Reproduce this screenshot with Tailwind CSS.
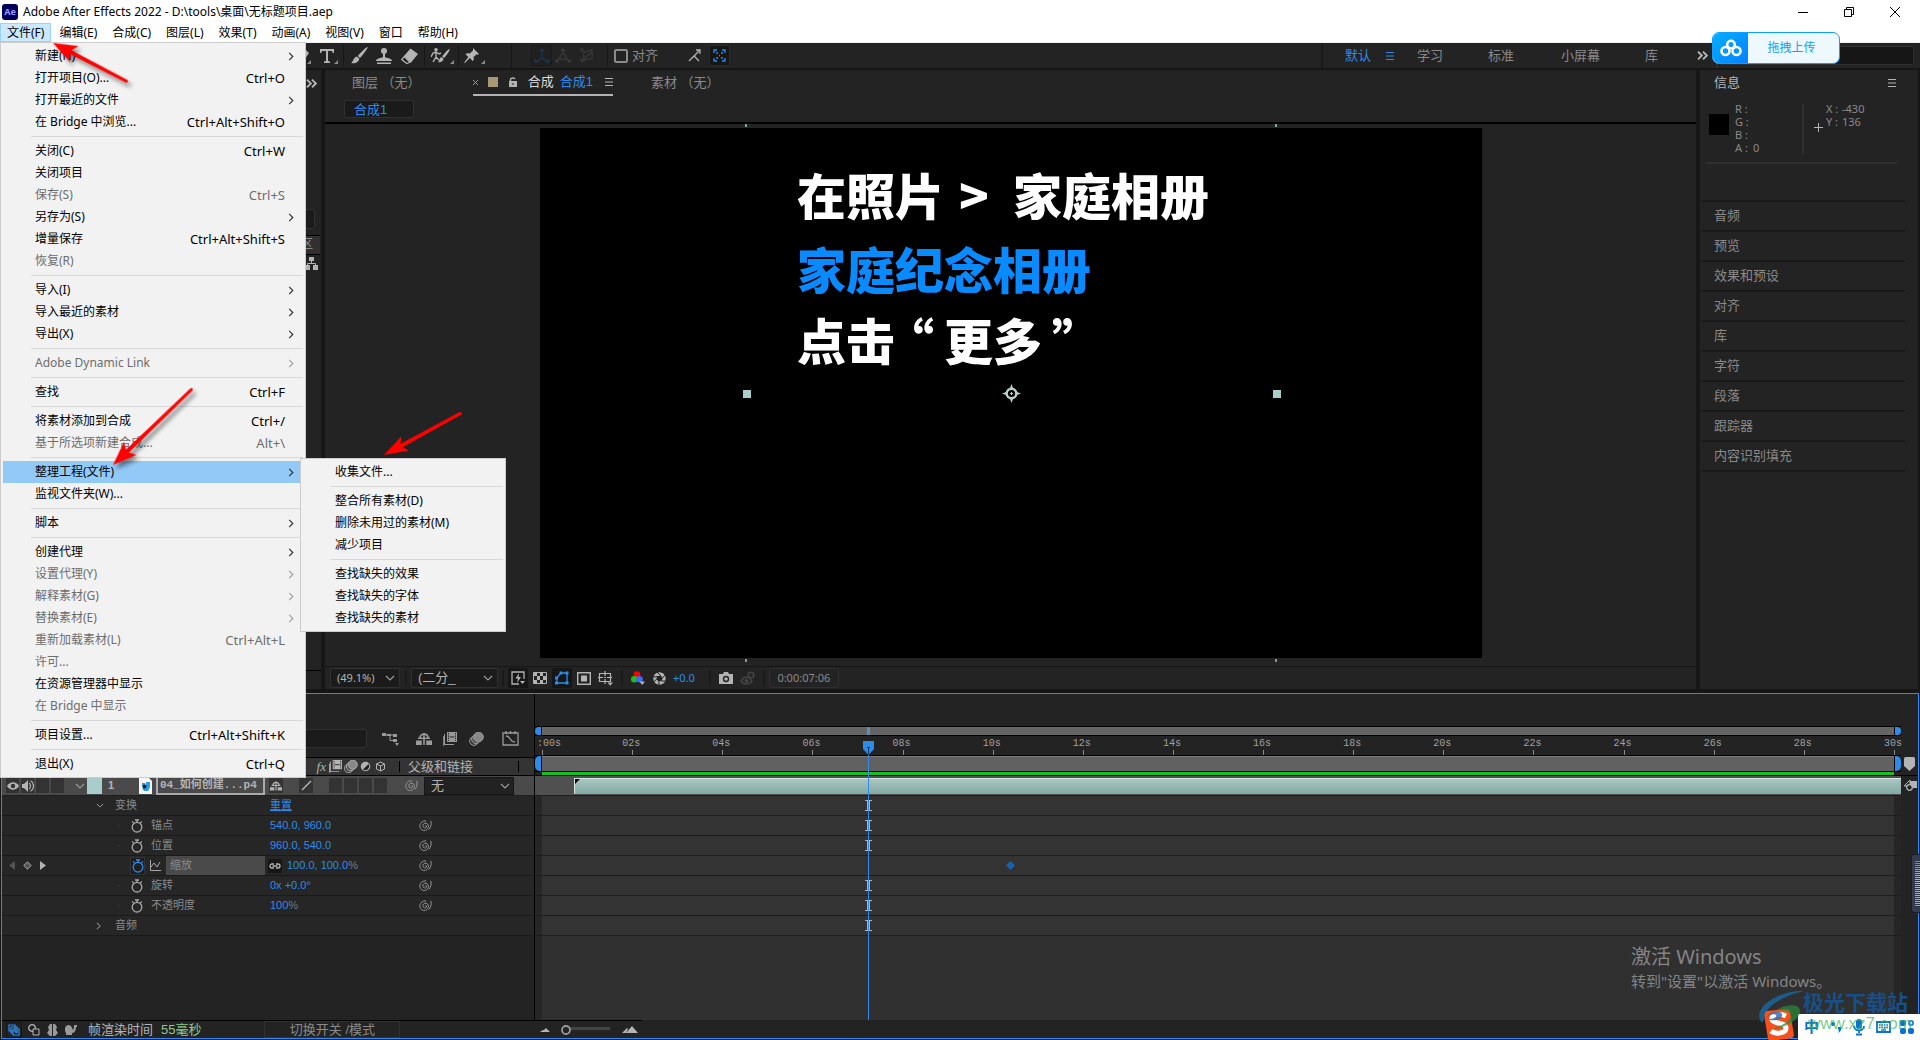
<!DOCTYPE html>
<html lang="zh-CN">
<head>
<meta charset="utf-8">
<title>Adobe After Effects 2022</title>
<script src="https://cdn.jsdelivr.net/npm/@tailwindcss/browser@4"></script>
</head>
<body class="relative flex min-h-screen flex-col overflow-x-hidden bg-[#161616] font-['Liberation_Sans','Noto_Sans_CJK_SC',sans-serif] text-[13px] text-[#8a8a8a]">

<svg class="hidden">
  <symbol id="tri" viewBox="0 0 4 4"><path d="M4 0V4H0z" fill="#8a8a8a"/></symbol>
  <symbol id="down" viewBox="0 0 10 6"><path d="M1 1l4 4 4-4" fill="none" stroke="#9a9a9a" stroke-width="1.2"/></symbol>
  <symbol id="right" viewBox="0 0 6 10"><path d="M1 1l4 4-4 4" fill="none" stroke="currentColor" stroke-width="1.3"/></symbol>
  <symbol id="more" viewBox="0 0 11 9"><path d="M1 .7l3.8 3.8L1 8.300M6 .7l3.800 3.800L6 8.300" fill="none" stroke="#b4b4b4" stroke-width="1.900"/></symbol>
  <symbol id="burger" viewBox="0 0 8 8"><path d="M0 .5h8M0 4h8M0 7.500h8" stroke="currentColor"/></symbol>
  <symbol id="watch" viewBox="0 0 12 14"><circle cx="6" cy="8.200" r="4.800" fill="none" stroke="currentColor" stroke-width="1.300"/><path d="M4 1h4M6 1v2.500M1.200 2.500l1.300 1.300M10.800 2.500L9.500 3.800" stroke="currentColor" stroke-width="1.300"/></symbol>
  <symbol id="spiral" viewBox="0 0 13 12"><path d="M6 6.200c.3-1 1.800-.7 1.600.6-.3 1.600-3.300 1.700-3.700-.5C3.600 4 5.300 2.800 7 3.200c2 .5 2.900 2.500 2.200 4.500C8.300 10.400 5 11.300 2.800 9.800.3 8 .3 4.600 2.200 2.600 3.500 1.100 5.500.7 7.200 1M11.800.8c.6 3 .4 6-1.800 8.500" fill="none" stroke="#979797" stroke-width="1"/></symbol>
  <symbol id="shy" viewBox="0 0 16 12"><path d="M0 7.500h5.800V12H0zM10.200 7.500H16V12h-5.800zM7.200 0h1.600v12H7.200zM2 4.500h12v1.600H2z" fill="currentColor"/><path d="M4 5C4-.2 12-.2 12 5" fill="none" stroke="currentColor" stroke-width="1.800"/></symbol>
  <symbol id="film" viewBox="0 0 14 14"><path d="M4 0h10v10H4zM2 2v10h9v1H1V2zM0 4h.8v10H10v0H0z" fill="currentColor"/><path d="M5.500 1v8M12.500 1v8" stroke="#262626" stroke-dasharray="1.400 1"/><path d="M6.500 5h5" stroke="#262626"/></symbol>
  <symbol id="blur" viewBox="0 0 15 14"><circle cx="5" cy="9" r="4.400" fill="#333" stroke="currentColor"/><circle cx="7" cy="7.200" r="4.400" fill="#555" stroke="currentColor"/><circle cx="9.500" cy="5" r="4.800" fill="#888" stroke="currentColor"/></symbol>
</svg>

<!-- title bar -->
<header class="flex h-[23px] shrink-0 items-center bg-white pr-[2px] pl-[2px] font-['Noto_Sans','Noto_Sans_CJK_SC',sans-serif] text-[12px] text-black">
  <span class="flex size-4 items-center justify-center rounded-[3px] bg-[#00005b] text-[9px] font-bold text-[#9999ff]">Ae</span>
  <h1 class="ml-[5px] flex-1 whitespace-nowrap">Adobe After Effects 2022 - D:\tools\桌面\无标题项目.aep</h1>
  <button class="flex w-[46px] justify-center" aria-label="最小化"><svg class="size-[10px]" viewBox="0 0 10 10"><path d="M0 5.500h10" stroke="#000"/></svg></button>
  <button class="flex w-[46px] justify-center" aria-label="还原"><svg class="size-[10px]" viewBox="0 0 10 10"><path d="M.5 2.500h7v7h-7zM2.500 2.500v-2h7v7h-2" fill="none" stroke="#000"/></svg></button>
  <button class="flex w-[46px] justify-center" aria-label="关闭"><svg class="size-[10px]" viewBox="0 0 10 10"><path d="M0 0l10 10M10 0L0 10" stroke="#000"/></svg></button>
</header>

<nav class="flex h-[20px] shrink-0 items-start gap-px border-b border-[#f0f0f0] bg-white font-['Noto_Sans','Noto_Sans_CJK_SC',sans-serif] text-[12px] leading-[18px] text-black">
  <button class="h-[19px] border border-[#99d1ff] bg-[#cce8ff] px-[6px]">文件(F)</button>
  <button class="h-[19px] px-[7px]">编辑(E)</button>
  <button class="h-[19px] px-[7px]">合成(C)</button>
  <button class="h-[19px] px-[7px]">图层(L)</button>
  <button class="h-[19px] px-[7px]">效果(T)</button>
  <button class="h-[19px] px-[7px]">动画(A)</button>
  <button class="h-[19px] px-[7px]">视图(V)</button>
  <button class="h-[19px] px-[7px]">窗口</button>
  <button class="h-[19px] px-[7px]">帮助(H)</button>
</nav>

<!-- tool bar -->
<div class="flex h-[27px] shrink-0 items-center border-b-2 border-[#161616] bg-[#232323]">
  <div class="flex w-[320px] shrink-0 items-end justify-end pr-[9px]"><svg class="h-[16px] w-[6px]" viewBox="0 0 6 16"><path d="M0 1l4 4-4 6z" fill="#b4b4b4"/><path d="M6 12v4H2z" fill="#8a8a8a"/></svg></div>
  <button aria-label="文字" class="flex w-[19px] items-end"><svg class="h-[16px] w-[14px]" viewBox="0 0 14 16"><path d="M0 1h14v4h-1.200L12 3H8v10l2 .6V15H4v-1.400L6 13V3H2l-.8 2H0z" fill="#b4b4b4"/></svg><svg class="size-1"><use href="#tri"/></svg></button>
  <i class="ml-[4px] h-[20px] w-px bg-[#161616]"></i>
  <button aria-label="画笔" class="ml-[7px]"><svg class="size-[17px]" viewBox="0 0 17 17"><path d="M16.500 0c1 1-6 9.500-7.500 11L6.800 9C8.500 7 15.500-.5 16.500 0zM6 9.600l2.300 2.200C8 15 4 17 0 16c2.500-1 2-5.500 6-6.400z" fill="#b4b4b4"/></svg></button>
  <button aria-label="仿制图章" class="ml-[8px]"><svg class="h-[16px] w-[16px]" viewBox="0 0 16 16"><circle cx="8" cy="3" r="3" fill="#b4b4b4"/><path d="M7 5h2v4c1 1 7 1 7 4H0c0-3 6-3 7-4zM1 14.500h14v1.500H1z" fill="#b4b4b4"/></svg></button>
  <button aria-label="橡皮擦" class="ml-[9px]"><svg class="h-[16px] w-[17px]" viewBox="0 0 17 16"><path d="M9.500.5L17 6l-7 8.500L3 8z" fill="#b4b4b4"/><path d="M3.300 8.500L.7 11.500l5 4L9 14.300z" fill="none" stroke="#b4b4b4" stroke-width="1.200"/></svg></button>
  <i class="ml-[6px] h-[20px] w-px bg-[#161616]"></i>
  <button aria-label="Roto 笔刷" class="ml-[6px] flex items-end"><svg class="h-[16px] w-[19px]" viewBox="0 0 19 16"><path d="M18.500 1c1 1-4 7.500-5.500 9l-1.800-1.600C12.500 6.500 17.700.5 18.500 1zM10.500 9l2 1.800c-.3 2.600-2.800 4-5.500 3.200 1.800-.8 1-4.200 3.500-5z" fill="#b4b4b4"/><circle cx="5" cy="1.800" r="1.800" fill="#b4b4b4"/><path d="M5 4v5l-3 5M5 9l3 3M0 9l2-4 3-1 3 2 2-1" fill="none" stroke="#b4b4b4" stroke-width="1.400"/></svg><svg class="size-1"><use href="#tri"/></svg></button>
  <i class="ml-[4px] h-[20px] w-px bg-[#161616]"></i>
  <button aria-label="人偶位置控点" class="ml-[5px] flex items-end"><svg class="h-[16px] w-[17px]" viewBox="0 0 17 16"><path d="M9 0l6 6-1.500.8-1-.3L9.500 9c.6 2 .3 3-.8 4L5.800 10 1 15l-.8-.5L4.300 9 1.500 6.200C2.500 5 4 5 5.800 5.500L9 2.500z" fill="#b4b4b4"/></svg><svg class="size-1"><use href="#tri"/></svg></button>
  <i class="ml-[26px] h-[24px] w-px bg-[#161616]"></i>
  <button aria-label="本地轴模式" class="ml-[19px] flex size-[21px] items-center justify-center border border-[#1a1a1a] bg-[#202020]"><svg class="size-[16px]" viewBox="0 0 16 16"><path d="M8 2v8L2 14M8 10l6 4M6 3l2-2 2 2M1 11v3h3M15 11v3h-3" fill="none" stroke="#1d3a5a" stroke-width="1.200"/></svg></button>
  <button aria-label="世界轴模式" class="ml-[3px]"><svg class="size-[16px]" viewBox="0 0 16 16"><path d="M8 1v5M6 3l2-2 2 2M5 10l-4 4M11 10l4 4M1 11v3h3M15 11v3h-3" fill="none" stroke="#3c3c3c" stroke-width="1.200"/><circle cx="8" cy="9" r="3" fill="none" stroke="#3c3c3c" stroke-width="1.200"/></svg></button>
  <button aria-label="视图轴模式" class="ml-[9px]"><svg class="size-[15px]" viewBox="0 0 16 16"><path d="M1 1l4 4M4 5l9-3v9l-9 2zM1 4V1h3M1 14l12-10M1 11v3h3" fill="none" stroke="#3c3c3c" stroke-width="1.200"/></svg></button>
  <i class="ml-[12px] h-[20px] w-px bg-[#161616]"></i>
  <label class="ml-[6px] flex items-center gap-[4px]"><input type="checkbox" class="size-[14px] appearance-none rounded-[2px] border-2 border-[#8a8a8a]">对齐</label>
  <button aria-label="对齐选项" class="ml-[30px]"><svg class="size-[13px]" viewBox="0 0 13 13"><path d="M1 12l5-5 5 5M6 7l5-5M8 1h4v4" fill="none" stroke="#b4b4b4" stroke-width="1.300"/></svg></button>
  <button aria-label="边界对齐" class="ml-[8px] flex size-[21px] items-center justify-center rounded-[2px] border border-[#2b2b2b] bg-[#161616]"><svg class="size-[13px]" viewBox="0 0 13 13"><path d="M1 4V1h3M9 1h3v3M12 9v3H9M4 12H1V9M4 5V4h1M8 4h1v1M9 8v1H8M5 9H4V8M6 6.500h1" fill="none" stroke="#2d8ceb" stroke-width="1.300"/></svg></button>
  <div class="flex-1"></div>
  <div class="flex h-full shrink-0 items-center border-l-2 border-[#1a1a1a] pl-[22px]">
    <button class="text-[#2d8ceb]">默认</button>
    <button class="ml-[15px] text-[#2d8ceb]" aria-label="工作区菜单"><svg class="size-2"><use href="#burger"/></svg></button>
    <button class="ml-[23px]">学习</button>
    <button class="ml-[45px]">标准</button>
    <button class="ml-[47px]">小屏幕</button>
    <button class="ml-[45px]">库</button>
    <button class="ml-[39px]" aria-label="更多工作区"><svg class="h-[9px] w-[11px]"><use href="#more"/></svg></button>
    <i class="ml-[8px] h-full w-[2px] bg-[#303030]"></i>
    <input aria-label="搜索帮助" class="mr-[6px] ml-[2px] h-[19px] w-[194px] rounded-[2px] border border-[#303030] bg-[#161616]">
  </div>
</div>

<!-- panels -->
<main class="flex flex-1 gap-[4px] pb-[4px]">
  <section class="flex w-[321px] shrink-0 flex-col items-end bg-[#232323]">
    <svg class="mt-[9px] mr-[4px] h-[9px] w-[11px]"><use href="#more"/></svg>
    <div class="mt-[121px] mr-[6px] h-[20px] w-[280px] rounded-[2px] border border-[#303030] bg-[#1b1b1b]"></div>
    <div class="mt-[6px] mr-px h-[20px] w-[280px] border-y border-black bg-[#303030] pr-[7px] text-right text-[12px] leading-[17px]">区</div>
    <svg class="mt-[2px] mr-[3px] h-[13px] w-[13px]" viewBox="0 0 13 13"><path d="M4 0h5v4H4zM0 8h5v5H0zM8 8h5v5H8z" fill="#b4b4b4"/><path d="M6.500 4v2.500M2.500 8V6.500h8V8" fill="none" stroke="#b4b4b4"/></svg>
    <div class="mt-auto mb-[18px] h-px w-full bg-black"></div>
  </section>

  <section class="flex min-w-0 flex-1 flex-col bg-[#232323]">
    <div class="flex h-[26px] items-center pl-[27px]">
      <button>图层 （无）</button>
      <div class="ml-[52px] flex h-full items-center self-end border-b-2 border-[#b4b4b4]">
        <button aria-label="关闭选项卡"><svg class="size-[5px]" viewBox="0 0 5 5"><path d="M0 0l5 5M5 0L0 5" stroke="#9a9a9a"/></svg></button>
        <i class="ml-[10px] size-[10px] bg-[#a99778]"></i>
        <svg class="ml-[11px] h-[10px] w-[8px]" viewBox="0 0 8 10"><path d="M0 4h8v6H0z" fill="#b4b4b4"/><path d="M1.500 4V2.500c0-2 4-2 4.500-.5" fill="none" stroke="#b4b4b4" stroke-width="1.400"/><path d="M4 6v2" stroke="#232323"/></svg>
        <button class="ml-[11px] flex gap-[6px] text-[#dcdcdc]">合成 <span class="text-[#2d8ceb]">合成1</span></button>
        <button class="ml-[12px] text-[#b4b4b4]" aria-label="面板菜单"><svg class="size-2"><use href="#burger"/></svg></button>
      </div>
      <button class="ml-[38px]">素材 （无）</button>
    </div>
    <div class="flex h-[28px] items-center border-b-2 border-black pl-[19px]">
      <button class="h-[18px] w-[70px] rounded-[2px] border border-[#303030] bg-[#1a1a1a] pl-[9px] text-left leading-[15px] text-[#2d8ceb]">合成1</button>
    </div>

    <div class="relative flex flex-1 flex-col bg-[#232323] pt-[4px] pb-[8px]">
      <!-- composition frame -->
      <div class="relative mr-[214px] ml-[215px] flex-1 bg-black pt-[29px] pl-[257px] font-['Noto_Sans_CJK_SC',sans-serif] text-[49px] leading-[74px] font-black whitespace-nowrap text-white">
        <p>在照片<span class="inline-block w-[69px] pl-[15px]">&gt;</span>家庭相册</p>
        <p class="text-[#0a8aff]">家庭纪念相册</p>
        <p class="leading-[68px]">点击<span class="mr-[10px] -ml-[10px]">“</span>更多<span class="ml-[10px]">”</span></p>
        <i class="absolute top-[262px] left-[203px] size-[8px] bg-[#a9cdca]"></i>
        <i class="absolute top-[262px] left-[733px] size-[8px] bg-[#a9cdca]"></i>
        <svg class="absolute top-[256px] left-[462px] size-[19px]" viewBox="0 0 19 19"><circle cx="9.500" cy="9.500" r="4.800" fill="none" stroke="#b9d0cd" stroke-width="2.400"/><path d="M9.500 0l1.500 4h-3zM9.500 19l1.500-4h-3zM0 9.500l4-1.500v3zM19 9.500l-4-1.500v3zM9 8h1v3H9zM8 9h3v1H8z" fill="#b9d0cd"/></svg>
        <i class="absolute -top-[4px] left-[205px] h-[3px] w-[2px] bg-[#7fa19e]"></i>
        <i class="absolute -top-[4px] left-[735px] h-[3px] w-[2px] bg-[#7fa19e]"></i>
        <i class="absolute -bottom-[4px] left-[205px] h-[3px] w-[2px] bg-[#7fa19e]"></i>
        <i class="absolute -bottom-[4px] left-[735px] h-[3px] w-[2px] bg-[#7fa19e]"></i>
      </div>
    </div>

    <div class="flex h-[23px] items-center border-t border-[#161616] pl-[5px] text-[#b4b4b4]">
      <label class="flex h-[20px] w-[70px] items-center rounded-[2px] border border-[#303030] bg-[#1b1b1b] pr-[4px]"><select aria-label="放大率" class="min-w-0 flex-1 appearance-none bg-transparent pl-[6px] font-['Noto_Sans',sans-serif] text-[11px]"><option>(49.1%)</option></select><svg class="h-[6px] w-[10px]"><use href="#down"/></svg></label>
      <i class="ml-[5px] h-[16px] w-[2px] bg-[#1a1a1a]"></i>
      <label class="ml-[4px] flex h-[20px] w-[87px] items-center rounded-[2px] border border-[#303030] bg-[#1b1b1b] pr-[4px]"><select aria-label="分辨率" class="min-w-0 flex-1 appearance-none bg-transparent pl-[6px] text-[13px] leading-[18px]"><option>(二分_</option></select><svg class="h-[6px] w-[10px]"><use href="#down"/></svg></label>
      <i class="ml-[4px] h-[16px] w-[2px] bg-[#1a1a1a]"></i>
      <button aria-label="快速预览" class="ml-[4px] flex size-[20px] items-center justify-center bg-[#161616]"><svg class="size-[14px]" viewBox="0 0 14 14"><path d="M13 8V1H1v12h7" fill="none" stroke="#b4b4b4" stroke-width="1.300"/><path d="M8 2L4.500 7.500H7L6 12l4-6H7.500zM9 10h5l-2.500 3z" fill="#b4b4b4"/></svg></button>
      <button aria-label="透明网格" class="ml-[5px]"><svg class="h-[12px] w-[14px]" viewBox="0 0 14 12"><path d="M.5.5h13v11H.5z" fill="#232323" stroke="#b4b4b4"/><path d="M1 1h3v3H1zM7 1h3v3H7zM4 4h3v4H4zM10 4h3v4h-3zM1 8h3v3H1zM7 8h3v3H7z" fill="#b4b4b4"/></svg></button>
      <button aria-label="蒙版可见性" class="ml-[5px] flex size-[20px] items-center justify-center bg-[#161616]"><svg class="size-[14px]" viewBox="0 0 14 14"><path d="M2 12V6.500L6 2h6v10z" fill="none" stroke="#2d8ceb" stroke-width="1.300"/><path d="M0 10.500h3v3H0zM10.500 10.500h3v3h-3zM10.500.5h3v3h-3zM4.500.5h3v3h-3zM0 5.500h3v3H0z" fill="#2d8ceb"/></svg></button>
      <button aria-label="目标区域" class="ml-[5px]"><svg class="h-[13px] w-[14px]" viewBox="0 0 14 13"><path d="M.7.7h12.600v11.600H.7z" fill="none" stroke="#b4b4b4" stroke-width="1.400"/><path d="M4 3.500h6v6H4z" fill="#b4b4b4"/></svg></button>
      <button aria-label="网格和参考线" class="ml-[7px]"><svg class="size-[15px]" viewBox="0 0 15 15"><path d="M1.500 2.500h11v8h-11zM7 0v5M7 8v5M0 6.500h5M9 6.500h5M6 6.500h2" fill="none" stroke="#b4b4b4" stroke-width="1.200"/><path d="M9.500 11.500h5.500l-2.800 3.300z" fill="#b4b4b4"/></svg></button>
      <i class="ml-[8px] h-[16px] w-[2px] bg-[#1a1a1a]"></i>
      <button aria-label="通道" class="ml-[8px]"><svg class="size-[14px]" viewBox="0 0 14 14"><circle cx="6" cy="3.500" r="3.300" fill="#f00"/><circle cx="3.300" cy="8.300" r="3.300" fill="#18c018"/><circle cx="8.500" cy="8.300" r="3.300" fill="#3d6bff"/><path d="M8.500 10.500H14L11.200 14z" fill="#b4b4b4"/></svg></button>
      <button aria-label="重置曝光度" class="ml-[8px]"><svg class="size-[13px]" viewBox="0 0 13 13"><circle cx="6.500" cy="6.500" r="4.500" fill="none" stroke="#b4b4b4" stroke-width="3.500"/><path d="M4 0l4 4M12 3L8.500 7M13 9l-5 0M6 13V8.500M1 10l3.500-4M0 5l5-.5" stroke="#232323"/></svg></button>
      <button class="ml-[7px] font-['Noto_Sans',sans-serif] text-[11px] text-[#2d8ceb]">+0.0</button>
      <i class="ml-[14px] h-[16px] w-[2px] bg-[#1a1a1a]"></i>
      <button aria-label="拍摄快照" class="ml-[8px]"><svg class="h-[12px] w-[14px]" viewBox="0 0 14 12"><path d="M0 2h4l1-2h4l1 2h4v10H0z" fill="#b4b4b4"/><circle cx="7" cy="7" r="2.500" fill="none" stroke="#232323" stroke-width="1.400"/></svg></button>
      <button aria-label="显示快照" class="ml-[7px]"><svg class="size-[15px]" viewBox="0 0 15 15"><path d="M1 10c3-5 8-5 11 0-3 4-8 4-11 0z" fill="none" stroke="#444" stroke-width="1.500"/><circle cx="6.500" cy="10" r="2" fill="#444"/><circle cx="11" cy="4" r="2.800" fill="none" stroke="#444" stroke-width="1.500"/></svg></button>
      <i class="ml-[8px] h-[16px] w-[2px] bg-[#1a1a1a]"></i>
      <button class="ml-[4px] h-[20px] w-[70px] rounded-[2px] border border-[#303030] font-['Noto_Sans',sans-serif] text-[11px] text-[#8a8a8a]">0:00:07:06</button>
    </div>
  </section>

  <aside class="mr-[2px] w-[218px] shrink-0 bg-[#232323] pl-px">
    <div class="flex h-[26px] items-center justify-between pr-[22px] pl-[13px] text-[#b4b4b4]"><h2>信息</h2><svg class="size-2"><use href="#burger"/></svg></div>
    <div class="flex h-[66px] items-start pt-[6px] pl-[8px] text-[11px] leading-[13px] font-['Noto_Sans',sans-serif]">
      <i class="mt-[12px] h-[21px] w-[20px] bg-black"></i>
      <dl class="ml-[6px] grid w-[67px] grid-cols-[18px_1fr]"><dt>R :</dt><dd></dd><dt>G :</dt><dd></dd><dt>B :</dt><dd></dd><dt>A :</dt><dd>0</dd></dl>
      <i class="mt-[2px] h-[50px] w-[2px] bg-[#303030]"></i>
      <svg class="mt-[21px] ml-[10px] size-[10px]" viewBox="0 0 10 10"><path d="M0 4.500h9M4.500 0v9" stroke="#b4b4b4"/></svg>
      <dl class="ml-[2px] grid grid-cols-[16px_1fr]"><dt>X :</dt><dd>-430</dd><dt>Y :</dt><dd>136</dd></dl>
    </div>
    <div class="mr-[21px] ml-[5px] h-[2px] bg-[#303030]"></div>
    <div class="mt-[36px] mr-[13px] flex flex-col text-[13px]">
      <button class="h-[30px] border-t-2 border-[#1a1a1a] pl-[13px] text-left">音频</button>
      <button class="h-[30px] border-t-2 border-[#1a1a1a] pl-[13px] text-left">预览</button>
      <button class="h-[30px] border-t-2 border-[#1a1a1a] pl-[13px] text-left">效果和预设</button>
      <button class="h-[30px] border-t-2 border-[#1a1a1a] pl-[13px] text-left">对齐</button>
      <button class="h-[30px] border-t-2 border-[#1a1a1a] pl-[13px] text-left">库</button>
      <button class="h-[30px] border-t-2 border-[#1a1a1a] pl-[13px] text-left">字符</button>
      <button class="h-[30px] border-t-2 border-[#1a1a1a] pl-[13px] text-left">段落</button>
      <button class="h-[30px] border-t-2 border-[#1a1a1a] pl-[13px] text-left">跟踪器</button>
      <button class="h-[32px] border-y-2 border-[#1a1a1a] pl-[13px] text-left">内容识别填充</button>
    </div>
  </aside>
</main>

<!-- timeline -->
<section class="mx-px mb-px flex h-[346px] shrink-0 flex-col border border-[#2d8ceb] bg-[#232323]">
  <div class="flex min-h-0 flex-1">
    <div class="flex w-[533px] shrink-0 flex-col border-r border-black">
      <div class="flex h-[63px] items-end pb-[9px] text-[#9a9a9a]">
        <input aria-label="搜索图层" class="h-[19px] w-[365px] rounded-[2px] border border-[#303030] bg-[#1b1b1b]">
        <svg class="mb-[2px] ml-[15px] h-[14px] w-[17px]" viewBox="0 0 17 14"><path d="M0 1h4v3H0zM5 2h4v2H5zM11 2h4v3h-4zM11 7h4v3h-4zM13 11h4l-2 3z" fill="currentColor"/><path d="M4 3h7M8 3v5.500h3" fill="none" stroke="currentColor"/></svg>
        <svg class="mb-[3px] ml-[17px] h-[12px] w-[16px]"><use href="#shy"/></svg>
        <svg class="mb-[2px] ml-[11px] size-[14px]"><use href="#film"/></svg>
        <svg class="mb-[2px] ml-[12px] h-[14px] w-[15px]"><use href="#blur"/></svg>
        <svg class="mb-[2px] ml-[18px] h-[15px] w-[17px]" viewBox="0 0 17 15"><path d="M1 2h15v12H1zM4 0v3M8.500 0v3M13 0v3M4 5c5 0 3 6 9 6" fill="none" stroke="currentColor" stroke-width="1.300"/></svg>
      </div>
      <div class="flex h-[19px] items-center border-y border-black bg-[#333] text-[#b4b4b4]">
        <span class="ml-[305px] w-[19px] text-right font-['Liberation_Serif',serif] text-[13px] italic">fx</span>
        <svg class="ml-[3px] size-[13px]"><use href="#film"/></svg>
        <svg class="ml-[2px] h-[13px] w-[14px]"><use href="#blur"/></svg>
        <svg class="ml-[2px] size-[11px]" viewBox="0 0 11 11"><circle cx="5.500" cy="5.500" r="4.700" fill="#b4b4b4"/><path d="M8.500 3a4 4 0 0 1-5.500 5.500z" fill="#222"/></svg>
        <svg class="ml-[4px] size-[11px]" viewBox="0 0 11 11"><path d="M5.500 1l4 2v5l-4 2-4-2V3zM1.500 3l4 2 4-2M5.500 5v5" fill="none" stroke="#b4b4b4"/></svg>
        <i class="ml-[13px] h-[11px] w-px bg-black"></i>
        <span class="ml-[8px] flex-1">父级和链接</span>
        <i class="mr-[15px] h-[11px] w-px bg-black"></i>
      </div>
      <div class="flex h-[20px] items-center border-b border-[#1e1e1e] bg-[#4a4a4a]">
        <button aria-label="可见性" class="ml-[4px] flex h-[15px] w-[13px] items-center justify-center bg-[#333]"><svg class="h-[8px] w-[12px]" viewBox="0 0 12 8"><path d="M0 4c3-5 9-5 12 0-3 5-9 5-12 0z" fill="#b4b4b4"/><circle cx="6" cy="4" r="2.200" fill="#333"/></svg></button>
        <button aria-label="音频开关" class="ml-[2px] flex h-[15px] w-[13px] items-center justify-center bg-[#333]"><svg class="h-[12px] w-[12px]" viewBox="0 0 12 12"><path d="M0 4h2l4-4v12L2 8H0z" fill="#b4b4b4"/><path d="M7 3c2 1 2 5 0 6M8.500.8c4 2 4 8.400 0 10.400" fill="none" stroke="#b4b4b4" stroke-width="1.200"/></svg></button>
        <i class="ml-[2px] h-[15px] w-[13px] bg-[#333]"></i>
        <i class="ml-[2px] h-[15px] w-[13px] bg-[#333]"></i>
        <svg class="ml-[11px] h-[6px] w-[10px]"><use href="#down"/></svg>
        <i class="ml-[2px] h-[16px] w-[15px] bg-[#a9cdca]"></i>
        <b class="ml-[6px] w-[7px] text-[11px] text-[#b4b4b4]">1</b>
        <svg class="ml-[24px] h-[16px] w-[13px]" viewBox="0 0 13 16"><path d="M0 0h10l3 3v13H0z" fill="#f4f4f4"/><path d="M3 5h3v3H3zM7 4h4v5l-2 4-4 0-2-3h3z" fill="#2b9be0"/><circle cx="5.500" cy="8.500" r="2" fill="#123"/></svg>
        <span class="ml-[4px] h-[19px] w-[109px] border-2 border-[#aaa] pl-[2px] font-['Liberation_Mono','Noto_Sans_CJK_SC',monospace] text-[11px] leading-[15px] font-bold whitespace-nowrap text-[#b4b4b4]">04_如何创建...p4</span>
        <i class="ml-[4px] flex h-[15px] w-[14px] items-center justify-center bg-[#333] text-[#b4b4b4]"><svg class="h-[10px] w-[12px]"><use href="#shy"/></svg></i>
        <i class="ml-[16px] flex h-[15px] w-[14px] items-center justify-center bg-[#333]"><svg class="size-[11px]" viewBox="0 0 11 11"><path d="M1 10l9-9" stroke="#b4b4b4" stroke-width="1.500"/></svg></i>
        <i class="ml-[16px] h-[15px] w-[13px] bg-[#333]"></i>
        <i class="ml-[2px] h-[15px] w-[13px] bg-[#333]"></i>
        <i class="ml-[2px] h-[15px] w-[13px] bg-[#333]"></i>
        <i class="ml-[2px] h-[15px] w-[13px] bg-[#333]"></i>
        <svg class="ml-[18px] h-[12px] w-[13px]"><use href="#spiral"/></svg>
        <label class="ml-[6px] flex h-[18px] w-[90px] items-center border border-[#161616] bg-[#222] pr-[3px]"><select aria-label="父级" class="min-w-0 flex-1 appearance-none bg-transparent pl-[6px] text-[13px] leading-[16px] text-[#b4b4b4]"><option>无</option></select><svg class="h-[6px] w-[10px]"><use href="#down"/></svg></label>
      </div>
      <div class="flex h-[20px] items-center border-b border-[#1a1a1a] bg-[#262626] text-[11px]">
        <svg class="ml-[94px] h-[5px] w-[8px]"><use href="#down"/></svg>
        <span class="ml-[11px] w-[155px]">变换</span><a href="#" class="text-[#2d8ceb] underline">重置</a>
      </div>
      <div id="props" class="text-[11px]"></div>
      <div class="flex h-[20px] items-center border-b border-[#1a1a1a] bg-[#262626] text-[11px]">
        <svg class="ml-[94px] h-[8px] w-[5px]"><use href="#right"/></svg>
        <span class="ml-[14px]">音频</span>
      </div>
    </div>

    <!-- tracks -->
    <div class="relative flex min-w-0 flex-1 flex-col">
      <div class="mt-[32px] flex h-[10px] border-y border-black"><i class="w-[7px] rounded-l-[6px] border-r border-black bg-[#2d8ceb]"></i><i class="flex-1 bg-[#666]"></i><i class="w-[7px] rounded-r-[6px] border-l border-black bg-[#2d8ceb]"></i></div>
      <div id="ruler" class="relative mx-[7px] h-[19px] font-['Liberation_Mono',monospace] text-[10px] leading-[16px] text-[#a0a0a0]"></div>
      <div class="flex h-[17px] border-y border-black"><i class="w-[7px] rounded-l-[5px] border-r border-black bg-[#2d8ceb]"></i><i class="flex-1 border-t border-[#7a7a7a] bg-[#616161]"></i><i class="w-[7px] rounded-r-[5px] border-l border-black bg-[#2d8ceb]"></i></div>
      <div class="h-[4px] border-b border-black px-[7px]"><div class="h-full bg-[#10c41c]"></div></div>
      <div class="h-[20px] border-b border-[#1e1e1e] bg-[#505050] pt-[2px] pl-[39px]"><div class="h-[16px] border-t border-l border-[#d4e4e1] bg-linear-to-b from-[#a8c6c2] to-[#82aaa5]"><svg class="size-[6px]" viewBox="0 0 6 6"><path d="M0 0h5L0 5z"/></svg></div></div>
      <div id="rows"></div>
      <div class="flex-1 bg-[#262626] px-[7px]"><div class="h-full bg-[#303030]"></div></div>
      <div class="pointer-events-none absolute inset-y-0 right-[7px] left-[7px]">
        <div id="playhead" class="absolute top-[47px] bottom-0 -ml-[5px] flex w-[11px] flex-col items-center"><i class="absolute -top-[14px] h-[8px] w-[3px] bg-[#5b8fc4]"></i><svg class="h-[14px] w-[11px] shrink-0" viewBox="0 0 11 14"><path d="M0 0h11v8l-5.500 6L0 8z" fill="#2d8ceb"/><path d="M5.500 7v7M4 6.500h3" stroke="#14385f"/></svg><i class="w-px flex-1 bg-[#2d8ceb]"></i></div>
      </div>
    </div>

    <div class="flex w-[17px] shrink-0 flex-col items-center pt-[63px]">
      <svg class="h-[14px] w-[11px]" viewBox="0 0 11 14"><path d="M0 1.500Q0 0 1.500 0h8Q11 0 11 1.500V9l-5.500 5L0 9z" fill="#b4b4b4"/></svg>
      <i class="mt-[4px] h-px w-full bg-black"></i>
      <svg class="mt-[3px] h-[12px] w-[14px]" viewBox="0 0 14 12"><path d="M7 2h7v7H7z" fill="#b4b4b4"/><path d="M1 7l6-6v6z" fill="#232323" stroke="#b4b4b4"/><circle cx="6.500" cy="8.500" r="2.800" fill="#232323" stroke="#b4b4b4" stroke-width="1.300"/></svg>
    </div>
  </div>

  <footer class="flex h-[18px] shrink-0 items-center text-[#b4b4b4]">
    <div class="flex h-full w-[640px] items-center border-t border-black">
    <button aria-label="图层开关" class="ml-[4px] flex size-[16px] items-center justify-center border border-[#161616]"><svg class="size-[12px]" viewBox="0 0 12 12"><path d="M1 1h6v6H1zM3 3h6v6M5 5h6v6H5zM3 3v6h2M7 8h2M8 7v2" fill="none" stroke="#2d8ceb" stroke-width="1.200"/></svg></button>
    <svg class="ml-[6px] size-[12px]" viewBox="0 0 12 12"><circle cx="4" cy="4" r="3.300" fill="none" stroke="#b4b4b4" stroke-width="1.300"/><path d="M5 5h6v6H5z" fill="#232323" stroke="#b4b4b4"/></svg>
    <svg class="ml-[7px] h-[12px] w-[11px]" viewBox="0 0 11 12"><path d="M1 3l2-3h2v12H3L0 9l2-3zM10 3L8 0H6v12h2l3-3-2-3z" fill="#9a9a9a"/></svg>
    <svg class="ml-[7px] h-[11px] w-[12px]" viewBox="0 0 12 11"><path d="M0 4c1-4 6-4 7 0l1 2c1-1 1-4 1-5h3v2h-1c0 4-2 6-4 6v2H1V9C0 8 0 6 0 4z" fill="#9a9a9a"/></svg>
    <span class="ml-[11px] text-[13px]">帧渲染时间</span><span class="ml-[8px] text-[13px] text-[#8fc98f]">55毫秒</span>
    <button class="ml-[63px] h-[17px] w-[136px] border border-[#303030] text-[13px] leading-[14px] text-[#8a8a8a]">切换开关 /模式</button>
    <svg class="ml-[140px] h-[4px] w-[10px]" viewBox="0 0 10 4"><path d="M0 4l3-2 1 0 2-2 4 4z" fill="#b4b4b4"/></svg>
    <svg class="ml-[11px] h-[10px] w-[49px]" viewBox="0 0 49 10"><path d="M6 3.500h43" stroke="#444" stroke-width="3"/><circle cx="5" cy="5" r="4" fill="#232323" stroke="#9a9a9a" stroke-width="1.800"/></svg>
    <svg class="ml-[12px] h-[7px] w-[16px]" viewBox="0 0 16 7"><path d="M0 7l5-5 1 1-2 4zM4 7l6-7 6 7z" fill="#b4b4b4"/></svg>
    </div>
  </footer>
</section>

<!-- file menu -->
<ul id="menu" class="absolute top-[42px] left-0 w-[306px] border border-[#ccc] bg-[#f2f2f2] p-[2px] font-['Noto_Sans','Noto_Sans_CJK_SC',sans-serif] text-[12px] text-black"></ul>
<ul id="submenu" class="absolute top-[458px] left-[300px] w-[206px] border border-[#ccc] bg-[#f2f2f2] p-[2px] font-['Noto_Sans','Noto_Sans_CJK_SC',sans-serif] text-[12px] text-black"></ul>

<!-- pointer arrows -->
<svg class="pointer-events-none absolute top-0 left-0 h-[500px] w-[520px]" viewBox="0 0 520 500">
  <g fill="#f00" class="drop-shadow-[3px_4px_2px_#0007]">
    <path transform="translate(53 43) rotate(27.500)" d="M0 0l24-9-4 7 63 .5q3 1.500 0 3L20 2l4 7z"/>
    <path transform="translate(113 465) rotate(-43.900)" d="M0 0l24-9-4 7 89 .5q3 1.500 0 3L20 2l4 7z"/>
  </g>
  <path fill="#f00" transform="translate(384 455) rotate(-28.600)" d="M0 0l24-8-4 6 67 .5q3 1.500 0 3L20 2l4 6z"/>
</svg>

<!-- cloud upload widget -->
<button class="absolute top-[32px] right-[80px] flex h-[32px] w-[128px] items-center overflow-hidden rounded-[7px] border border-[#0aa0ff] bg-[#eef8ff] text-[12px] text-[#0aa0ff]">
  <span class="flex h-full w-[35px] items-center justify-center bg-linear-to-br from-[#0aaeff] to-[#0a80ff]"><svg class="h-[18px] w-[22px]" viewBox="0 0 22 18"><g fill="none" stroke="#fff" stroke-width="2.600"><circle cx="11" cy="5.500" r="3.800"/><circle cx="5.500" cy="12" r="4"/><circle cx="16.500" cy="12" r="4"/></g></svg></span>
  <span class="flex-1 pr-[4px] text-center">拖拽上传</span>
</button>

<!-- audio level gadget -->
<div class="absolute right-0 bottom-[127px] flex h-[59px] w-[9px] flex-col justify-center rounded-l-[3px] border border-r-0 border-[#1a1d2c] bg-[#343a50] pl-[3px]"><i class="h-[46px] bg-[repeating-linear-gradient(#0000_0_1px,#2b3042_1px_2px),linear-gradient(#e0574f,#e0b04a_30%,#b9c75a_55%,#4fd0b0)]"></i></div>

<!-- activation notice -->
<div class="pointer-events-none absolute right-[90px] bottom-[48px] w-[199px] font-['Noto_Sans','Noto_Sans_CJK_SC',sans-serif] whitespace-nowrap text-[#858585]">
  <p class="text-[20px] leading-[26px]">激活 Windows</p>
  <p class="text-[15px] leading-[22px]">转到"设置"以激活 Windows。</p>
</div>

<!-- input method bar and site mark -->
<div class="absolute right-0 bottom-0 flex h-[26px] w-[122px] items-center bg-white pl-[6px] text-[#0a6fd6]">
  <b class="text-[15px]">中</b>
  <svg class="ml-[11px] h-[12px] w-[12px]" viewBox="0 0 12 12"><circle cx="3" cy="3" r="2" fill="#0a6fd6"/><path d="M8 6h3c1 3-1 5-3 6 1-2 1-3 0-4z" fill="#0a6fd6"/></svg>
  <svg class="ml-[11px] h-[17px] w-[12px]" viewBox="0 0 12 17"><rect x="3" width="6" height="10" rx="3" fill="#0a6fd6"/><path d="M1 7c0 6 10 6 10 0M6 11v3M3 15.500h6" fill="none" stroke="#0a6fd6" stroke-width="1.800"/></svg>
  <svg class="ml-[11px] h-[12px] w-[15px]" viewBox="0 0 15 12"><path d="M1 1h13v10H1z" fill="none" stroke="#0a6fd6" stroke-width="1.800"/><path d="M3 4h9M3 6.500h9" stroke="#0a6fd6" stroke-width="1.500" stroke-dasharray="1.500 1"/><path d="M5 9h5" stroke="#0a6fd6" stroke-width="1.400"/></svg>
  <svg class="ml-[9px] size-[14px]" viewBox="0 0 14 14"><rect width="6" height="6" rx="2" fill="#0a6fd6"/><rect y="8" width="6" height="6" rx="2" fill="#0a6fd6"/><rect x="8" y="8" width="6" height="6" rx="2" fill="#0a6fd6"/><rect x="9" y="1" width="4" height="4" rx="1" fill="none" stroke="#0a6fd6" stroke-width="1.600"/></svg>
</div>
<svg class="pointer-events-none absolute right-[116px] bottom-0 h-[50px] w-[46px]" viewBox="0 0 46 50">
  <path d="M6 24Q6 22 8 21L29 19q2 0 3 2l4 24q0 2-2 3l-21 3q-2 0-3-2z" fill="#f4511e"/><path d="M28 26c-6-3-15-1-14 4 1 4 14 2 14 8 0 5-10 7-15 3" fill="none" stroke="#fff" stroke-width="5"/>
  <path d="M46 1C22 0-4 16 2 30c2 4 4 2 4-2C6 16 28 5 46 1z" fill="#17669c" fill-opacity=".85"/>
  <path d="M18 20c12-7 24-6 24 1 0 8-14 17-30 19 12-4 22-10 21-15-1-4-8-5-15-5z" fill="#2a8a3a" fill-opacity=".7"/>
  <path d="M8 28c4-8 18-8 16-2-2 5-11 5-14 3 6 0 9-2 8-4-2-2-7 0-10 3z" fill="#2a68b0" fill-opacity=".8"/>
</svg>
<div class="pointer-events-none absolute right-[4px] bottom-[5px] w-[113px] whitespace-nowrap">
  <p class="font-['Noto_Sans_CJK_SC',sans-serif] text-[21px] leading-[24px] font-bold text-[#174f86]">极光下载站</p>
  <p class="pl-[5px] text-[17px] leading-[22px] text-[#3cb45a]/70">www.xz7.com</p>
</div>

<script>
const chevron = '<svg class="h-[9px] w-[6px]"><use href="#right"/></svg>';
function fill(id, items) {
  document.getElementById(id).innerHTML = items.map(it => {
    if (it === '-') return '<li class="flex h-[7px] items-center pl-[28px]"><hr class="w-full border-[#d7d7d7]"></li>';
    const [label, key, flags = ''] = it;
    const tone = flags.includes('d') ? 'text-[#6d6d6d]' : 'text-black';
    const bg = flags.includes('h') ? 'bg-[#91c9f7]' : '';
    const arrow = key === '>' ? `<span class="mr-[9px] ${flags.includes('d') ? 'text-[#a0a0a0]' : 'text-[#333]'}">${chevron}</span>` : `<span class="mr-[18px] text-[13px]">${key || ''}</span>`;
    return `<li><button class="flex h-[22px] w-full items-center justify-between pl-[32px] leading-[18px] whitespace-nowrap ${tone} ${bg}"><span>${label}</span>${arrow}</button></li>`;
  }).join('');
}
fill('menu', [
  ['新建(N)', '>'], ['打开项目(O)...', 'Ctrl+O'], ['打开最近的文件', '>'], ['在 Bridge 中浏览...', 'Ctrl+Alt+Shift+O'], '-',
  ['关闭(C)', 'Ctrl+W'], ['关闭项目'], ['保存(S)', 'Ctrl+S', 'd'], ['另存为(S)', '>'], ['增量保存', 'Ctrl+Alt+Shift+S'], ['恢复(R)', '', 'd'], '-',
  ['导入(I)', '>'], ['导入最近的素材', '>'], ['导出(X)', '>'], '-',
  ['Adobe Dynamic Link', '>', 'd'], '-',
  ['查找', 'Ctrl+F'], '-',
  ['将素材添加到合成', 'Ctrl+/'], ['基于所选项新建合成...', 'Alt+\\', 'd'], '-',
  ['整理工程(文件)', '>', 'h'], ['监视文件夹(W)...'], '-',
  ['脚本', '>'], '-',
  ['创建代理', '>'], ['设置代理(Y)', '>', 'd'], ['解释素材(G)', '>', 'd'], ['替换素材(E)', '>', 'd'], ['重新加载素材(L)', 'Ctrl+Alt+L', 'd'], ['许可...', '', 'd'], ['在资源管理器中显示'], ['在 Bridge 中显示', '', 'd'], '-',
  ['项目设置...', 'Ctrl+Alt+Shift+K'], '-', ['退出(X)', 'Ctrl+Q']
]);
fill('submenu', [['收集文件...'], '-', ['整合所有素材(D)'], ['删除未用过的素材(M)'], ['减少项目'], '-', ['查找缺失的效果'], ['查找缺失的字体'], ['查找缺失的素材']]);

const spiral = '<svg class="ml-auto mr-[102px] h-[12px] w-[13px]"><use href="#spiral"/></svg>';
const prop = (name, value) => `<div class="flex h-[20px] items-center border-b border-[#1a1a1a] bg-[#262626]"><i class="ml-[116px] size-px bg-[#555]"></i><svg class="ml-[12px] h-[14px] w-[12px] text-[#a8a8a8]"><use href="#watch"/></svg><span class="ml-[8px] w-[119px]">${name}</span><span class="whitespace-pre text-[#2d8ceb]">${value}</span>${spiral}</div>`;
const scale = `<div class="flex h-[20px] items-center border-b border-[#1a1a1a] bg-[#262626]">
  <svg class="ml-[7px] h-[9px] w-[38px]" viewBox="0 0 38 9"><path d="M6 0v9L0 4.500z" fill="#555"/><path d="M18.500 .8l3.700 3.700-3.700 3.700-3.700-3.700z" fill="#555" stroke="#aaa"/><path d="M31 0v9l6-4.500z" fill="#b4b4b4"/></svg>
  <span class="ml-[83px] flex h-[18px] w-[15px] items-center justify-center border border-[#333] bg-[#1e1e1e] text-[#2d8ceb]"><svg class="h-[14px] w-[12px]"><use href="#watch"/></svg></span>
  <svg class="ml-[5px] size-[11px]" viewBox="0 0 11 11"><path d="M.5 0v10.500H11M1 7l3-4 3 4 3-5" fill="none" stroke="#a8a8a8"/></svg>
  <span class="ml-[5px] h-[19px] w-[99px] bg-[#4a4a4a] pl-[4px] leading-[18px]">缩放</span>
  <span class="ml-[3px] flex h-[14px] w-[14px] items-center justify-center bg-[#161616]"><svg class="h-[6px] w-[12px]" viewBox="0 0 12 6"><path d="M5 1H3a2 2 0 0 0 0 4h2M7 1h2a2 2 0 0 1 0 4H7M3.500 3h5" fill="none" stroke="#b4b4b4" stroke-width="1.300"/></svg></span>
  <span class="ml-[5px] text-[#2d8ceb]">100.0, 100.0<span class="text-[#6f7c88]">%</span></span>${spiral}</div>`;
document.getElementById('props').innerHTML = prop('锚点', '540.0, 960.0') + prop('位置', '960.0, 540.0') + scale + prop('旋转', '0x +0.0°') + prop('不透明度', '100<span class="text-[#6f7c88]">%</span>');

const DURATION = 30, NOW = 7.24;
let ruler = '';
for (let t = 0; t <= DURATION; t += 2) {
  const pos = (t / DURATION * 100) + '%';
  const text = t === 0 ? ':00s' : String(t).padStart(2, '0') + 's';
  const side = t === 0 ? 'ml-[-5px]' : 'ml-[-10px]';
  ruler += `<span class="absolute top-0 ${side}" style="left:${pos}">${text}</span><i class="absolute bottom-0 h-[5px] w-px bg-[#8a8a8a]" style="left:${pos}"></i>`;
}
document.getElementById('ruler').innerHTML = ruler;
document.getElementById('playhead').style.left = (NOW / DURATION * 100) + '%';
document.getElementById('rows').innerHTML = [1, 1, 1, 0, 1, 1, 1].map(beam => `<div class="h-[20px] border-b border-[#1e1e1e] bg-[#262626] px-[7px]"><div class="relative h-full bg-[#333]">${beam
  ? `<svg class="absolute top-[4px] -ml-[3px] h-[11px] w-[7px]" style="left:${NOW / DURATION * 100}%" viewBox="0 0 7 11"><path d="M0 .5h7M0 10.500h7M2.500 0v11M4.500 0v11" stroke="#b4b4b4"/></svg>`
  : '<svg class="absolute top-[5px] -ml-[4px] size-[9px]" style="left:34.600%" viewBox="0 0 9 9"><path d="M4.500 0L9 4.500 4.500 9 0 4.500z" fill="#1163b8"/></svg>'}</div></div>`).join('');
</script>
</body>
</html>
